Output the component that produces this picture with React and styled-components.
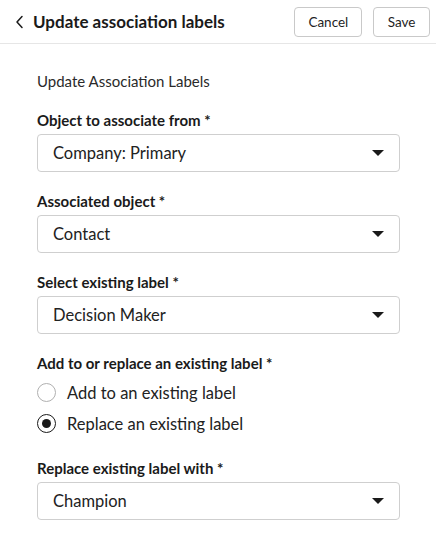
import React, { useState } from 'react';
import styled, { createGlobalStyle } from 'styled-components';

const GlobalStyle = createGlobalStyle`
  html, body {
    margin: 0;
    padding: 0;
    background: #fff;
  }
  body {
    font-family: Lato, "Open Sans", sans-serif;
    color: #1f1f1f;
  }
`;

const Header = styled.header`
  height: 43px;
  border-bottom: 1px solid #e6e6e6;
  display: flex;
  align-items: center;
  padding: 0 6px 0 12px;
`;

const Back = styled.button`
  border: none;
  background: none;
  padding: 0;
  width: 14px;
  height: 20px;
  display: flex;
  align-items: center;
  justify-content: center;
  cursor: pointer;
  margin-right: 7px;
`;

const Title = styled.h1`
  flex: 1;
  margin: 0;
  font-size: 17px;
  font-weight: 700;
  color: #1a1a1a;
`;

const Actions = styled.div`
  display: flex;
  gap: 11px;
`;

const Button = styled.button`
  height: 30px;
  padding: 0 ${(p) => p.$pad}px;
  border: 1px solid #c9c9c9;
  border-radius: 4px;
  background: #fff;
  font-family: inherit;
  font-size: 13.5px;
  color: #1f1f1f;
  cursor: pointer;
`;

const Body = styled.main`
  padding: 27px 36px 20px 37px;
  display: flex;
  flex-direction: column;
  gap: 19px;
`;

const Intro = styled.p`
  margin: 0;
  font-size: 15px;
  line-height: 20px;
  color: #2a2a2a;
`;

const Field = styled.div`
  display: flex;
  flex-direction: column;
  gap: 4px;
`;

const Label = styled.label`
  font-size: 15px;
  line-height: 20px;
  font-weight: 700;
  color: #1a1a1a;
`;

const Select = styled.div`
  height: 36px;
  border: 1px solid #cfcfcf;
  border-radius: 4px;
  display: flex;
  align-items: center;
  justify-content: space-between;
  padding: 0 15px;
  font-size: 16.5px;
  color: #222;
  cursor: pointer;
`;

const Caret = styled.span`
  width: 0;
  height: 0;
  border-left: 6px solid transparent;
  border-right: 6px solid transparent;
  border-top: 6px solid #1a1a1a;
`;

const RadioRow = styled.label`
  display: flex;
  align-items: center;
  height: 31px;
  gap: 11px;
  font-size: 16.5px;
  color: #222;
  cursor: pointer;
`;

const RadioDot = styled.span`
  box-sizing: border-box;
  width: 19px;
  height: 19px;
  border-radius: 50%;
  border: ${(p) => (p.$on ? '1.5px solid #1a1a1a' : '1.2px solid #b0b0b0')};
  display: flex;
  align-items: center;
  justify-content: center;

  &::after {
    content: '';
    width: 9px;
    height: 9px;
    border-radius: 50%;
    background: #1a1a1a;
    display: ${(p) => (p.$on ? 'block' : 'none')};
  }
`;

const RadioGroup = styled.div`
  display: flex;
  flex-direction: column;
`;

const SelectField = ({ label, value }) => (
  <Field>
    <Label>{label}</Label>
    <Select>
      <span>{value}</span>
      <Caret />
    </Select>
  </Field>
);

export default function App() {
  const [mode, setMode] = useState('replace');

  return (
    <>
      <GlobalStyle />
      <Header>
        <Back aria-label="Back">
          <svg width="9" height="14" viewBox="0 0 9 14" fill="none">
            <path d="M7 1.5L2 7l5 5.5" stroke="#1a1a1a" strokeWidth="1.5" strokeLinecap="round" strokeLinejoin="round" />
          </svg>
        </Back>
        <Title>Update association labels</Title>
        <Actions>
          <Button $pad={13}>Cancel</Button>
          <Button $pad={13.5}>Save</Button>
        </Actions>
      </Header>
      <Body>
        <Intro>Update Association Labels</Intro>
        <SelectField label="Object to associate from *" value="Company: Primary" />
        <SelectField label="Associated object *" value="Contact" />
        <SelectField label="Select existing label *" value="Decision Maker" />
        <Field>
          <Label>Add to or replace an existing label *</Label>
          <RadioGroup>
            <RadioRow onClick={() => setMode('add')}>
              <RadioDot $on={mode === 'add'} />
              Add to an existing label
            </RadioRow>
            <RadioRow onClick={() => setMode('replace')}>
              <RadioDot $on={mode === 'replace'} />
              Replace an existing label
            </RadioRow>
          </RadioGroup>
        </Field>
        <SelectField label="Replace existing label with *" value="Champion" />
      </Body>
    </>
  );
}
